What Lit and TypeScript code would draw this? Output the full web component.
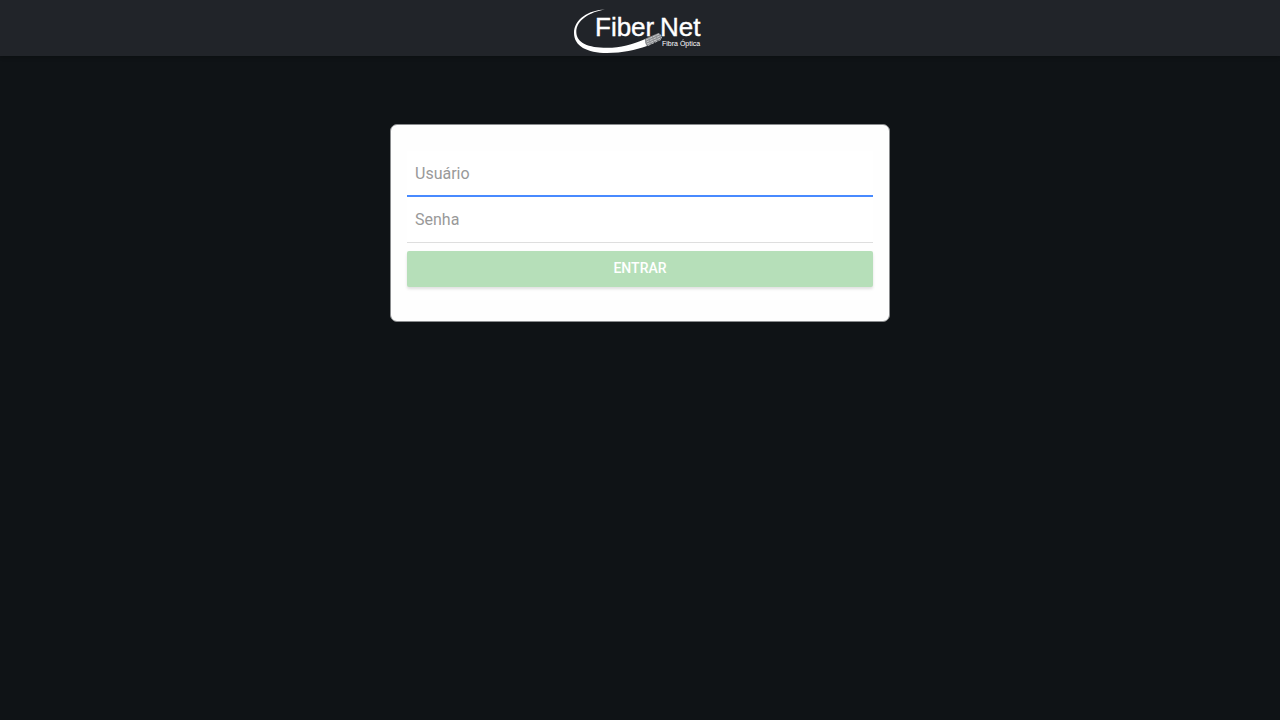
import { LitElement, html, css, svg } from "lit";
import { customElement } from "lit/decorators.js";

const strands = svg`
  <path d="M80.5 38.5 L93.5 33 Q97.5 34.5 96.5 38.5 L82 46 Q79 42.5 80.5 38.5 Z" fill="#8b8d90"/>
  <path d="M81 40 L94 34 M81.5 42 L96 35.5 M82 44 L97 37.5 M83 45.5 L96 39.5"
    stroke="#d8d9db" stroke-width=".8" stroke-dasharray="3 .8" fill="none"/>
`;

@customElement("brand-logo")
export class BrandLogo extends LitElement {
  static styles = css`
    :host {
      display: block;
      line-height: 0;
    }
    .title {
      font-family: "Liberation Sans", Arial, sans-serif;
      font-size: 26px;
      fill: #fff;
      stroke: #fff;
      stroke-width: 0.4px;
    }
    .tagline {
      font-family: "Liberation Sans", Arial, sans-serif;
      font-size: 7px;
      fill: #fff;
    }
  `;

  render() {
    return html`
      <svg width="150" height="56" viewBox="0 0 150 56" role="img" aria-label="Fiber Net Fibra Óptica">
        <path
          d="M40 9.4 C24 9.8 9 19 9 33 C9 46 22 53 42 53 C58 53 70 50 82 46 L80.3 39 C67 44.5 56 47.8 42 47.8 C23 47.8 11.5 43 11.3 32 C11.2 20 25 11.8 40 9.4 Z"
          fill="#fff"
        />
        ${strands}
        <text class="title" x="30" y="36">Fiber</text>
        <text class="title" x="95" y="36">Net</text>
        <text class="tagline" x="97" y="46">Fibra Óptica</text>
      </svg>
    `;
  }
}

@customElement("app-root")
export class AppRoot extends LitElement {
  static styles = css`
    :host {
      display: flex;
      flex-direction: column;
      min-height: 100vh;
      background: #0f1316;
      font-family: Roboto, "Open Sans", sans-serif;
    }
    .toolbar {
      display: flex;
      justify-content: center;
      background: #212429;
      box-shadow: 0 1px 4px rgba(0, 0, 0, 0.25);
    }
    .content {
      padding: 68px 16px;
    }
    .card {
      box-sizing: border-box;
      width: 100%;
      max-width: 500px;
      margin: 0 auto;
      padding: 26px 16px 34px;
      display: flex;
      flex-direction: column;
      background: #fefefe;
      border: 1px solid #8a8c8e;
      border-radius: 7px;
    }
    .field {
      box-sizing: border-box;
      width: 100%;
      height: 46px;
      padding: 0 8px;
      border: 0;
      border-bottom: 1px solid #dedede;
      border-radius: 0;
      outline: 0;
      background: #fff;
      color: #222;
      font: 400 16px/24px Roboto, "Open Sans", sans-serif;
    }
    .field::placeholder {
      color: #999;
      opacity: 1;
    }
    .current {
      border-bottom: 2px solid #488aff;
    }
    .submit {
      height: 36px;
      margin-top: 8px;
      padding: 0 0 2px;
      border: 0;
      border-radius: 2px;
      background: #b6dfb9;
      color: #fff;
      font: 500 14px/16px Roboto, "Open Sans", sans-serif;
      text-transform: uppercase;
      box-shadow: 0 2px 3px rgba(0, 0, 0, 0.12);
    }
  `;

  render() {
    return html`
      <header class="toolbar"><brand-logo></brand-logo></header>
      <main class="content">
        <form class="card" @submit=${(e: Event) => e.preventDefault()}>
          <input class="field current" type="text" placeholder="Usuário" aria-label="Usuário" autocomplete="username" />
          <input class="field" type="password" placeholder="Senha" aria-label="Senha" autocomplete="current-password" />
          <button class="submit" type="submit">Entrar</button>
        </form>
      </main>
    `;
  }
}
